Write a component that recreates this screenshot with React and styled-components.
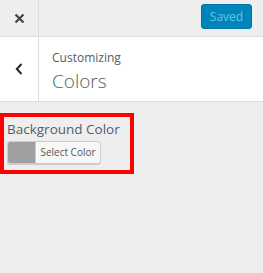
import React from "react";
import styled, { createGlobalStyle } from "styled-components";

const Global = createGlobalStyle`
  html, body { margin: 0; padding: 0; background: #eeeeee; }
  body { font-family: "Open Sans", "Noto Sans", sans-serif; color: #555d66; }
  * { box-sizing: border-box; }
`;

const Page = styled.div`
  width: 263px;
  height: 273px;
  background: #eeeeee;
  overflow: hidden;
`;

const Header = styled.div`
  display: flex;
  align-items: stretch;
  height: 37px;
  border-bottom: 1px solid #dddddd;
`;

const IconCell = styled.div`
  width: 39px;
  flex: none;
  display: flex;
  align-items: center;
  justify-content: center;
  border-right: 1px solid #dddddd;
  color: #444;
  background: ${(p) => p.$bg || "transparent"};
`;

const HeaderFill = styled.div`
  flex: 1;
  display: flex;
  justify-content: flex-end;
  align-items: flex-start;
  padding: 4px 11px 0 0;
`;

const SaveButton = styled.button`
  width: 51px;
  height: 25px;
  border: 1px solid #0073aa;
  border-radius: 3px;
  background: #0085ba;
  color: #66c6e4;
  font-family: "Open Sans", sans-serif;
  font-size: 12px;
  padding: 0;
  line-height: 23px;
`;

const SectionTitle = styled.div`
  display: flex;
  height: 65px;
  background: #ffffff;
  border-bottom: 1px solid #dddddd;
`;

const TitleText = styled.div`
  padding: 13px 0 0 13px;
  display: flex;
  flex-direction: column;
`;

const Small = styled.span`
  font-size: 12px;
  line-height: 16px;
  color: #555d66;
`;

const Big = styled.span`
  font-size: 19px;
  font-weight: 300;
  line-height: 26px;
  margin-top: 2px;
  color: #555d66;
`;

const Body = styled.div`
  padding-top: 11px;
`;

const Highlight = styled.div`
  width: 134px;
  border: 4px solid #ff0000;
  padding: 3px 3px 2px 3px;
`;

const ControlTitle = styled.div`
  font-size: 13.5px;
  font-weight: 500;
  line-height: 18px;
  color: #555d66;
  margin-bottom: 3px;
`;

const ColorButton = styled.div`
  display: inline-flex;
  height: 23px;
  width: 94px;
  border: 1px solid #cccccc;
  border-radius: 3px;
  overflow: hidden;
  box-shadow: 0 1px 0 #cccccc;
  background: #f7f7f7;
`;

const Swatch = styled.span`
  width: 28px;
  flex: none;
  background: ${(p) => p.$color};
  border-right: 1px solid #cccccc;
`;

const SelectLabel = styled.span`
  flex: 1;
  font-size: 10px;
  line-height: 21px;
  text-align: center;
  color: #555555;
  white-space: nowrap;
`;

export default function App() {
  return (
    <Page>
      <Global />
      <Header>
        <IconCell>
          <svg width="11" height="11" viewBox="0 0 11 11">
            <path d="M1.5 1.5 L9.5 9.5 M9.5 1.5 L1.5 9.5" stroke="#444" strokeWidth="2.2" />
          </svg>
        </IconCell>
        <HeaderFill>
          <SaveButton>Saved</SaveButton>
        </HeaderFill>
      </Header>
      <SectionTitle>
        <IconCell $bg="#ffffff">
          <svg width="8" height="12" viewBox="0 0 8 12">
            <path d="M6.5 1 L1.8 6 L6.5 11" stroke="#23282d" strokeWidth="2" fill="none" />
          </svg>
        </IconCell>
        <TitleText>
          <Small>Customizing</Small>
          <Big>Colors</Big>
        </TitleText>
      </SectionTitle>
      <Body>
        <Highlight>
          <ControlTitle>Background Color</ControlTitle>
          <ColorButton>
            <Swatch $color="#a0a0a0" />
            <SelectLabel>Select Color</SelectLabel>
          </ColorButton>
        </Highlight>
      </Body>
    </Page>
  );
}
